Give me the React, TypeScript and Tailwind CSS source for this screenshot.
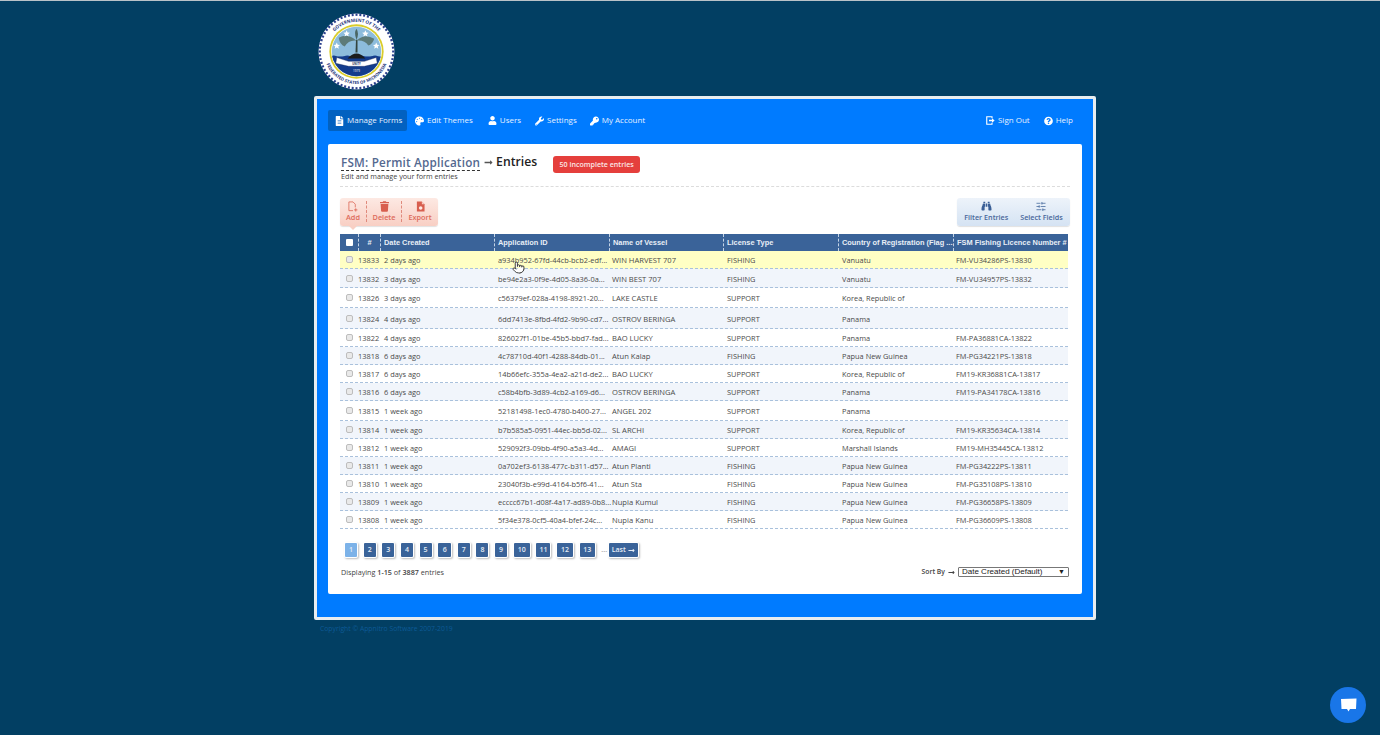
import { FaFileAlt, FaPalette, FaUser, FaWrench, FaKey, FaQuestionCircle, FaTrash, FaBinoculars, FaLongArrowAltRight } from "react-icons/fa";
import { Pointer, SlidersHorizontal } from "lucide-react";

const rows = [
  ["13833", "2 days ago", "a934b952-67fd-44cb-bcb2-edf...", "WIN HARVEST 707", "FISHING", "Vanuatu", "FM-VU34286PS-13830", "h-[18px]", "bg-[#ffffc4]"],
  ["13832", "3 days ago", "be94e2a3-0f9e-4d05-8a36-0a...", "WIN BEST 707", "FISHING", "Vanuatu", "FM-VU34957PS-13832", "h-[19px]", "bg-[#f1f5fb]"],
  ["13826", "3 days ago", "c56379ef-028a-4198-8921-20...", "LAKE CASTLE", "SUPPORT", "Korea, Republic of", "", "h-[20px]", "bg-white"],
  ["13824", "4 days ago", "6dd7413e-8fbd-4fd2-9b90-cd7...", "OSTROV BERINGA", "SUPPORT", "Panama", "", "h-[21px]", "bg-[#f1f5fb]"],
  ["13822", "4 days ago", "826027f1-01be-45b5-bbd7-fad...", "BAO LUCKY", "SUPPORT", "Panama", "FM-PA36881CA-13822", "h-[18px]", "bg-white"],
  ["13818", "6 days ago", "4c78710d-40f1-4288-84db-01...", "Atun Kalap", "FISHING", "Papua New Guinea", "FM-PG34221PS-13818", "h-[18px]", "bg-[#f1f5fb]"],
  ["13817", "6 days ago", "14b66efc-355a-4ea2-a21d-de2...", "BAO LUCKY", "SUPPORT", "Korea, Republic of", "FM19-KR36881CA-13817", "h-[18px]", "bg-white"],
  ["13816", "6 days ago", "c58b4bfb-3d89-4cb2-a169-d6...", "OSTROV BERINGA", "SUPPORT", "Panama", "FM19-PA34178CA-13816", "h-[18px]", "bg-[#f1f5fb]"],
  ["13815", "1 week ago", "52181498-1ec0-4780-b400-27...", "ANGEL 202", "SUPPORT", "Panama", "", "h-[20px]", "bg-white"],
  ["13814", "1 week ago", "b7b585a5-0951-44ec-bb5d-02...", "SL ARCHI", "SUPPORT", "Korea, Republic of", "FM19-KR35634CA-13814", "h-[18px]", "bg-[#f1f5fb]"],
  ["13812", "1 week ago", "529092f3-09bb-4f90-a5a3-4d...", "AMAGI", "SUPPORT", "Marshall Islands", "FM19-MH35445CA-13812", "h-[18px]", "bg-white"],
  ["13811", "1 week ago", "0a702ef3-6138-477c-b311-d57...", "Atun Planti", "FISHING", "Papua New Guinea", "FM-PG34222PS-13811", "h-[18px]", "bg-[#f1f5fb]"],
  ["13810", "1 week ago", "23040f3b-e99d-4164-b5f6-41...", "Atun Sta", "FISHING", "Papua New Guinea", "FM-PG35108PS-13810", "h-[18px]", "bg-white"],
  ["13809", "1 week ago", "ecccc67b1-d08f-4a17-ad89-0b8...", "Nupia Kumul", "FISHING", "Papua New Guinea", "FM-PG36658PS-13809", "h-[18px]", "bg-[#f1f5fb]"],
  ["13808", "1 week ago", "5f34e378-0cf5-40a4-bfef-24c...", "Nupia Kanu", "FISHING", "Papua New Guinea", "FM-PG36609PS-13808", "h-[18px]", "bg-white"],
];

const headers = [
  ["#", "w-[22px] justify-center"],
  ["Date Created", "w-[114px] pl-[3px]"],
  ["Application ID", "w-[115px] pl-[3px]"],
  ["Name of Vessel", "w-[114px] pl-[3px]"],
  ["License Type", "w-[115px] pl-[3px]"],
  ["Country of Registration (Flag ...", "w-[115px] pl-[3px]"],
  ["FSM Fishing Licence Number #", "w-[115px] pl-[3px]"],
];

const pages = [
  ["1", "w-[12px]"], ["2", "w-[12px]"], ["3", "w-[12px]"], ["4", "w-[12px]"], ["5", "w-[12px]"], ["6", "w-[13px]"], ["7", "w-[12px]"], ["8", "w-[12px]"], ["9", "w-[12px]"], ["10", "w-[16px]"], ["11", "w-[14px]"], ["12", "w-[16px]"], ["13", "w-[15px]"],
];

function Seal() {
  const beads = Array.from({ length: 60 }, (_, i) => i * 6);
  return (
    <svg viewBox="0 0 78 78" className="w-[77px] h-[77px] block">
      <defs>
        <path id="sealTop" d="M 9 39 A 30 30 0 0 1 69 39" />
        <path id="sealBottom" d="M 6 39 A 33 33 0 0 0 72 39" />
        <clipPath id="sealInner"><circle cx="39" cy="39" r="25" /></clipPath>
      </defs>
      <circle cx="39" cy="39" r="38.5" fill="#ffffff" />
      {beads.map((a) => (
        <rect key={a} x="38" y="0.5" width="2" height="2.4" fill="#2a3f8c" transform={`rotate(${a} 39 39)`} />
      ))}
      <circle cx="39" cy="39" r="35" fill="#ffffff" />
      <text fontSize="4.6" fontFamily="'Open Sans', sans-serif" fontWeight="700" fill="#26367c">
        <textPath href="#sealTop" startOffset="50%" textAnchor="middle">GOVERNMENT OF THE</textPath>
      </text>
      <text fontSize="4.4" fontFamily="'Open Sans', sans-serif" fontWeight="700" fill="#26367c">
        <textPath href="#sealBottom" startOffset="50%" textAnchor="middle">FEDERATED STATES OF MICRONESIA</textPath>
      </text>
      <circle cx="39" cy="39" r="27.5" fill="#d9cc2a" />
      <circle cx="39" cy="39" r="25.7" fill="#ffffff" />
      <g clipPath="url(#sealInner)">
        <rect x="12" y="12" width="54" height="54" fill="#8dbcdc" />
        <rect x="12" y="44" width="54" height="24" fill="#143c8c" />
        <path d="M12 44 q4 -2 7 0 t7 0 t7 0 t7 0 t7 0 t7 0 t7 0 t7 0 v4 h-54 z" fill="#143c8c" />
        <path d="M30 46 Q39 36 48 46 Z" fill="#1c1c1c" />
        <path d="M38 40 L38.5 27 L40 27 L40 40 Z" fill="#33443f" />
        <path d="M39 28 Q30 20 21 25 Q22 32 27 34 Q31 27 39 28 Z" fill="#5d7b79" />
        <path d="M39 28 Q47 20 57 26 Q55 32 51 33 Q47 27 39 28 Z" fill="#5d7b79" />
        <path d="M39 27 Q36 20 39 16 Q42 21 39 27 Z" fill="#4a6663" />
        <path d="M19 45 L31 49 L47 49 L59 45 L60 51 L47 54 L31 54 L18 51 Z" fill="#ffffff" stroke="#1c2c5c" strokeWidth="0.4" />
        <text x="39" y="52.5" fontSize="2.8" textAnchor="middle" fill="#1c2c5c" fontFamily="'Open Sans', sans-serif" fontWeight="700">UNITY</text>
        <text x="39" y="60" fontSize="3" textAnchor="middle" fill="#ffffff" fontFamily="'Open Sans', sans-serif">1979</text>
        <g fill="#ffffff">
          <path d="M30 20.5 l1 2.2 2.3 .2 -1.8 1.5 .6 2.3 -2.1 -1.2 -2.1 1.2 .6 -2.3 -1.8 -1.5 2.3 -.2 z" transform="translate(-1 -3)" />
          <path d="M47 20.5 l1 2.2 2.3 .2 -1.8 1.5 .6 2.3 -2.1 -1.2 -2.1 1.2 .6 -2.3 -1.8 -1.5 2.3 -.2 z" transform="translate(1 -3)" />
          <path d="M20 30 l1 2.2 2.3 .2 -1.8 1.5 .6 2.3 -2.1 -1.2 -2.1 1.2 .6 -2.3 -1.8 -1.5 2.3 -.2 z" transform="translate(-1 0)" />
          <path d="M58 30 l1 2.2 2.3 .2 -1.8 1.5 .6 2.3 -2.1 -1.2 -2.1 1.2 .6 -2.3 -1.8 -1.5 2.3 -.2 z" transform="translate(1 0)" />
        </g>
      </g>
    </svg>
  );
}

function SignOutIcon() {
  return (
    <svg viewBox="0 0 12 12" className="w-[11px] h-[11px]">
      <path d="M8 3 V1 H1 V11 H8 V9" fill="none" stroke="#fff" strokeWidth="1.5" />
      <path d="M4 5 H8 V3 L11.5 6 L8 9 V7 H4 Z" fill="#fff" />
    </svg>
  );
}

function AddIcon() {
  return (
    <svg viewBox="0 0 12 12" className="w-[12px] h-[11px]">
      <path d="M6 10.5 H1.5 V1 H6 L8.5 3.5 V7" fill="none" stroke="#dd6b5b" strokeWidth="0.9" />
      <path d="M9 8 V11.5 M7.2 9.7 H10.8" stroke="#dd6b5b" strokeWidth="1" />
    </svg>
  );
}

function ExportIcon() {
  return (
    <svg viewBox="0 0 10 12" className="w-[9px] h-[11px]">
      <path d="M1 0.5 H6.5 L9.5 3.5 V11.5 H1 Z" fill="#d85f4f" />
      <path d="M6.5 0.5 V3.5 H9.5" fill="#f7cfc6" />
      <circle cx="5.2" cy="7.6" r="2" fill="#fde9e3" />
    </svg>
  );
}

function ChatIcon() {
  return (
    <svg viewBox="0 0 17 14" className="w-[17px] h-[14px]">
      <path d="M1 1 L16.5 0.5 L16 11 H10 L8.5 13.5 L7 11 H1.5 Z" fill="#fff" />
    </svg>
  );
}

function Check({ dark }: { dark?: boolean }) {
  return dark ? (
    <span className="block w-[7px] h-[7px] bg-white rounded-[1px]" />
  ) : (
    <span className="block w-[7px] h-[7px] bg-[#e9e9e9] border border-[#bdbdbd] rounded-[2px]" />
  );
}

function NavItem({ icon, label, cls }: { icon: React.ReactNode; label: string; cls?: string }) {
  return (
    <div className={`flex items-center h-[21px] gap-[3px] ${cls ?? ""}`}>
      <span className="w-[9px] flex justify-center">{icon}</span>
      <span className="-mt-[2px]">{label}</span>
    </div>
  );
}

export default function App() {
  return (
    <div className="relative h-[735px] overflow-hidden bg-[#023f63] border-t border-[#b9c2c8] text-[#444] font-['Open_Sans',sans-serif]">
      <div className="ml-[318px] pt-[12px] h-[95px]">
        <Seal />
      </div>
      <div className="ml-[314px] w-[782px] h-[524px] border-[3px] border-[#e8edf0] bg-[#007bff] rounded-[2px] px-[11px] pt-[11px]">
        <nav className="h-[21px] flex items-center text-[8px] text-[#e6f1ff]">
          <NavItem cls="bg-[#0261c0] w-[79px] pl-[7px] rounded-[2px]" icon={<FaFileAlt className="w-[9px] h-[10px] text-white" />} label="Manage Forms" />
          <NavItem cls="ml-[8px]" icon={<FaPalette className="w-[10px] h-[10px] text-white" />} label="Edit Themes" />
          <NavItem cls="ml-[15px]" icon={<FaUser className="w-[10px] h-[9px] text-white" />} label="Users" />
          <NavItem cls="ml-[14px]" icon={<FaWrench className="w-[10px] h-[10px] text-white" />} label="Settings" />
          <NavItem cls="ml-[13px]" icon={<FaKey className="w-[10px] h-[10px] text-white" />} label="My Account" />
          <div className="ml-auto mr-[9px] flex gap-[14px]">
            <NavItem icon={<SignOutIcon />} label="Sign Out" />
            <NavItem icon={<FaQuestionCircle className="w-[10px] h-[10px] text-white" />} label="Help" />
          </div>
        </nav>
        <main className="mt-[13px] w-[754px] h-[450px] bg-white rounded-[2px] px-[12px] pt-[9px]">
          <div className="h-[34px] border-b border-dashed border-[#dcdcdc] relative">
            <div className="flex items-start h-[19px] pl-[1px]">
              <span className="text-[11.7px] leading-[18px] font-semibold text-[#53688f] border-b border-dashed border-[#333] tracking-[0.2px] h-[18px]">FSM: Permit Application</span>
              <FaLongArrowAltRight className="w-[9px] h-[9px] mt-[5px] ml-[4px] mr-[3px] text-[#555]" />
              <span className="text-[12.2px] leading-[18px] font-semibold text-[#222]">Entries</span>
              <span className="ml-[16px] mt-[3px] h-[17px] w-[87px] flex items-center justify-center rounded-[3px] bg-[#e53f3c] text-[7.1px] font-semibold text-[#fbe6e6]">50 incomplete entries</span>
            </div>
            <div className="text-[7.2px] leading-[10px] mt-[-1px] pl-[1px] text-[#444]">Edit and manage your form entries</div>
          </div>

          <div className="mt-[11px] flex justify-between h-[28px]">
            <div className="relative flex items-center h-[28px] w-[98px] rounded-[3px] bg-gradient-to-b from-[#fde9e3] to-[#f8cfc4] text-[#dd6b5b] text-[7.3px] font-semibold shadow-[0_1px_1px_rgba(0,0,0,0.12)]">
              <div className="w-[27px] flex flex-col items-center border-r border-dashed border-[#e08a7c] h-[21px] -mt-[2px]">
                <AddIcon />
                <span className="leading-[10px]">Add</span>
              </div>
              <div className="w-[35px] flex flex-col items-center border-r border-dashed border-[#e08a7c] h-[21px] -mt-[2px]">
                <FaTrash className="w-[9px] h-[11px] text-[#d85f4f]" />
                <span className="leading-[10px]">Delete</span>
              </div>
              <div className="w-[36px] flex flex-col items-center h-[21px] -mt-[2px]">
                <ExportIcon />
                <span className="leading-[10px]">Export</span>
              </div>
              <span className="absolute left-[9px] bottom-[-4px] w-0 h-0 border-l-[4px] border-r-[4px] border-t-[4px] border-l-transparent border-r-transparent border-t-[#f8cfc4]" />
            </div>
            <div className="flex items-center justify-center gap-[12px] h-[28px] w-[113px] rounded-[3px] bg-gradient-to-b from-[#edf3fa] to-[#d5e3f3] text-[#49679a] text-[7.2px] font-semibold shadow-[0_1px_1px_rgba(0,0,0,0.12)]">
              <div className="flex flex-col items-center -mt-[2px]">
                <FaBinoculars className="w-[11px] h-[10px] text-[#3a5f96]" />
                <span className="leading-[10px] mt-[1px]">Filter Entries</span>
              </div>
              <div className="flex flex-col items-center -mt-[2px]">
                <SlidersHorizontal className="w-[12px] h-[11px] text-[#3a5f96]" strokeWidth={1.6} />
                <span className="leading-[10px]">Select Fields</span>
              </div>
            </div>
          </div>

          <div className="mt-[8px] w-[728px] relative">
            <div className="flex h-[17px] bg-[#3a6399] text-[#e8eef6] text-[7.4px] font-bold font-['Liberation_Sans',sans-serif] whitespace-nowrap">
              <div className="w-[18px] flex items-center justify-center"><Check dark /></div>
              {headers.map(([label, cls]) => (
                <div key={label} className={`flex items-center border-l border-dashed border-[#c3d3e6] overflow-hidden ${cls}`}>{label}</div>
              ))}
            </div>
            {rows.map((r) => (
              <div key={r[0]} className={`flex items-center pt-[3px] border-b border-dashed border-[#a9c1dc] text-[7.4px] text-[#4a4a4a] whitespace-nowrap ${r[7]} ${r[8]}`}>
                <div className="w-[18px] flex justify-center -mt-[3px]"><Check /></div>
                <div className="w-[22px] text-right pr-[1px]">{r[0]}</div>
                <div className="w-[114px] pl-[4px]">{r[1]}</div>
                <div className="w-[115px] pl-[4px]">{r[2]}</div>
                <div className="w-[114px] pl-[3px] text-[7.6px]">{r[3]}</div>
                <div className="w-[115px] pl-[4px]">{r[4]}</div>
                <div className="w-[115px] pl-[4px]">{r[5]}</div>
                <div className="w-[115px] pl-[3px] text-[7.4px]">{r[6]}</div>
              </div>
            ))}
            <Pointer className="absolute left-[172px] top-[26px] w-[13px] h-[15px] text-[#222] fill-white" strokeWidth={1.6} />
          </div>

          <div className="mt-[14px] ml-[5px] flex items-center gap-[6.65px] h-[14px] text-[7px] font-semibold text-[#e6edf6]">
            {pages.map(([p, w]) => (
              <span key={p} className={`flex items-center justify-center h-[14px] rounded-[1px] shadow-[0_0_0_1px_#ffffff,1px_1px_2px_1px_rgba(0,0,0,0.25)] ${w} ${p === "1" ? "bg-[#7cb2e8]" : "bg-[#3a6399]"}`}>{p}</span>
            ))}
            <span className="text-[#aaa] -mr-[5px]">...</span>
            <span className="flex items-center justify-center gap-[2px] h-[14px] w-[29px] rounded-[1px] bg-[#3a6399] shadow-[0_0_0_1px_#ffffff,1px_1px_2px_1px_rgba(0,0,0,0.25)]">Last <FaLongArrowAltRight className="w-[7px] h-[7px]" /></span>
          </div>

          <div className="mt-[8px] flex items-center justify-between h-[14px] text-[7.2px] text-[#444] w-[729px]">
            <span className="pl-[1px]">Displaying <b className="font-semibold">1-15</b> of <b className="font-semibold">3887</b> entries</span>
            <div className="flex items-center gap-[3px]">
              <span className="font-semibold text-[6.8px]">Sort By</span>
              <FaLongArrowAltRight className="w-[7px] h-[7px]" />
              <div className="w-[111px] h-[10px] border border-[#777] rounded-[1px] bg-white flex items-center justify-between px-[3px] font-['Liberation_Sans',sans-serif] text-[8px] text-[#222]">
                <span>Date Created (Default)</span>
                <span className="text-[7px]">▼</span>
              </div>
            </div>
          </div>
        </main>
      </div>
      <div className="ml-[320px] mt-[4px] text-[6.8px] leading-[10px] text-[#0d5a96]">Copyright © Appnitro Software 2007-2019</div>
      <div className="absolute left-[1330px] top-[686px] w-[36px] h-[36px] rounded-full bg-[#1976e8] flex items-center justify-center">
        <ChatIcon />
      </div>
    </div>
  );
}
